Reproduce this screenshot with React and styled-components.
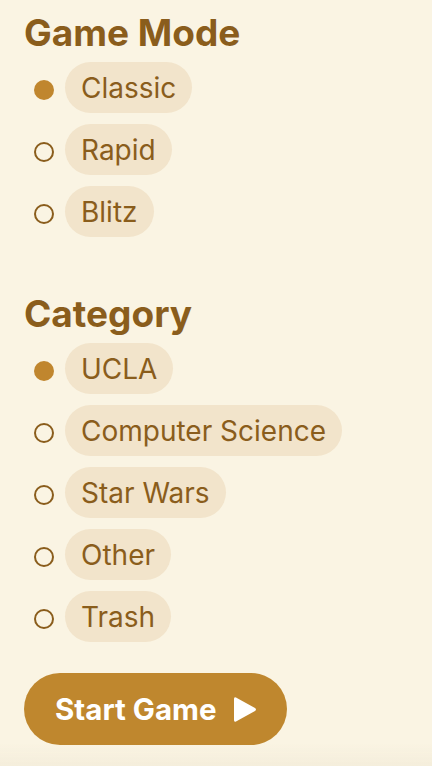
import React, { useState } from "react";
import styled, { createGlobalStyle } from "styled-components";

const Global = createGlobalStyle`
  html, body { margin: 0; padding: 0; background: #faf4e3; }
  body { font-family: Inter, "Noto Sans", sans-serif; overflow: hidden; }
  * { box-sizing: border-box; }
`;

const Page = styled.div`
  min-height: 766px;
  padding: 11px 24px 0 24px;
  display: flex;
  flex-direction: column;
`;

const Section = styled.section`
  display: flex;
  flex-direction: column;
  margin-top: ${(p) => (p.$first ? "0" : "55px")};
`;

const Heading = styled.h2`
  margin: 0 0 7px 0;
  font-size: 37px;
  line-height: 44px;
  font-weight: 700;
  color: #8a5d1c;
`;

const List = styled.div`
  display: flex;
  flex-direction: column;
  gap: 11px;
`;

const Row = styled.label`
  display: flex;
  align-items: center;
  gap: 11px;
  padding-left: 10px;
  cursor: pointer;
`;

const Radio = styled.span`
  width: 20px;
  height: 20px;
  margin-top: 4px;
  border-radius: 50%;
  flex: none;
  background: ${(p) => (p.$on ? "#c0862e" : "transparent")};
  border: ${(p) => (p.$on ? "none" : "2px solid #8a5d1c")};
`;

const Pill = styled.span`
  height: 51px;
  display: inline-flex;
  align-items: center;
  padding: 0 16px;
  border-radius: 26px;
  background: #f2e4cb;
  color: #8a5d1c;
  font-size: 28px;
  font-weight: 400;
`;

const StartButton = styled.button`
  margin-top: 31px;
  align-self: flex-start;
  height: 72px;
  padding: 0 30px 0 31px;
  border: none;
  border-radius: 36px;
  background: #bf872e;
  color: #fff;
  font-family: Inter, "Noto Sans", sans-serif;
  font-size: 29.5px;
  font-weight: 700;
  display: flex;
  align-items: center;
  gap: 16px;
  cursor: pointer;
`;

const BottomShade = styled.div`
  position: fixed;
  left: 0;
  right: 0;
  bottom: 0;
  height: 22px;
  background: linear-gradient(to bottom, rgba(238, 230, 210, 0), rgba(238, 230, 210, 0.45));
  pointer-events: none;
`;

const modes = ["Classic", "Rapid", "Blitz"];
const categories = ["UCLA", "Computer Science", "Star Wars", "Other", "Trash"];

function Group({ title, items, value, onChange, first }) {
  return (
    <Section $first={first}>
      <Heading>{title}</Heading>
      <List>
        {items.map((it) => (
          <Row key={it} onClick={() => onChange(it)}>
            <Radio $on={value === it} />
            <Pill>{it}</Pill>
          </Row>
        ))}
      </List>
    </Section>
  );
}

export default function App() {
  const [mode, setMode] = useState("Classic");
  const [cat, setCat] = useState("UCLA");
  return (
    <>
      <Global />
      <Page>
        <Group first title="Game Mode" items={modes} value={mode} onChange={setMode} />
        <Group title="Category" items={categories} value={cat} onChange={setCat} />
        <StartButton>
          Start Game
          <svg width="24" height="27" viewBox="0 0 24 27">
            <path
              d="M3 1.5 Q1 0.5 1 3 L1 24 Q1 26.5 3 25.5 L22 15 Q24 13.5 22 12 Z"
              fill="#fff"
            />
          </svg>
        </StartButton>
      </Page>
      <BottomShade />
    </>
  );
}
